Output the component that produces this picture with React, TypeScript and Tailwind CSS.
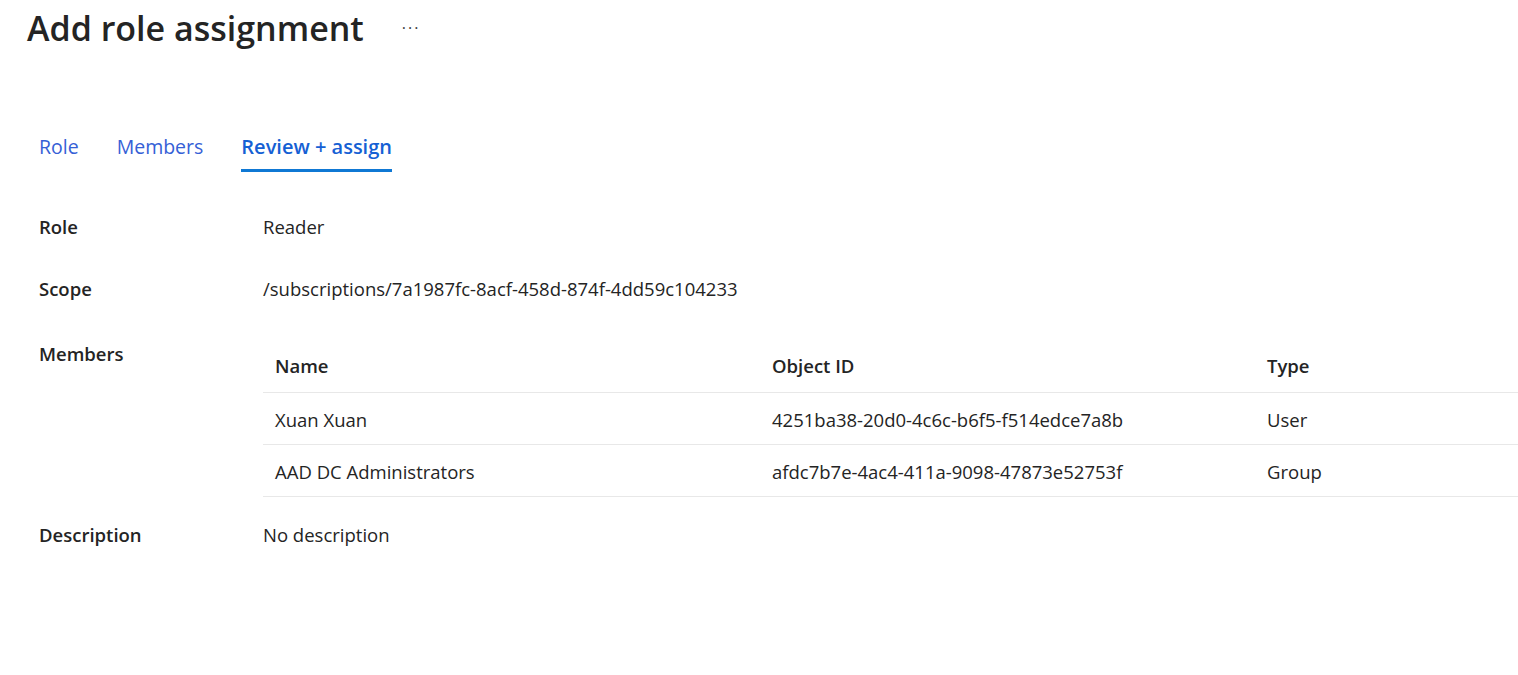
import React from 'react'

const font = { fontFamily: '"Open Sans", "Noto Sans", sans-serif' }

const members = [
  { name: 'Xuan Xuan', id: '4251ba38-20d0-4c6c-b6f5-f514edce7a8b', type: 'User' },
  { name: 'AAD DC Administrators', id: 'afdc7b7e-4ac4-411a-9098-47873e52753f', type: 'Group' },
]

function Tabs() {
  return (
    <div className="flex items-end gap-[38px] pl-[39px]">
      <div className="pb-[12px] text-[19.5px] leading-[27px] text-[#3560d6]">Role</div>
      <div className="pb-[12px] text-[19.5px] leading-[27px] text-[#3560d6]">Members</div>
      <div className="border-b-[3px] border-[#0f78d4] pb-[9px] text-[20px] font-semibold leading-[27px] text-[#1560d4]">
        Review + assign
      </div>
    </div>
  )
}

function Row({ label, children }: { label: string; children: React.ReactNode }) {
  return (
    <div className="flex">
      <div className="w-[224px] shrink-0 text-[18.5px] font-semibold leading-[25px] text-[#242424]">{label}</div>
      <div className="min-w-0 flex-1 text-[18.5px] leading-[25px] text-[#242424]">{children}</div>
    </div>
  )
}

export default function App() {
  return (
    <div className="h-[675px] w-[1518px] overflow-hidden bg-white text-[#242424]" style={font}>
      <div className="flex items-center pl-[27px] pt-[4px]">
        <h1 className="text-[34px] font-semibold leading-[48px] text-[#242424]">Add role assignment</h1>
        <span className="ml-[38px] text-[16px] tracking-[2px] text-[#424242]">···</span>
      </div>

      <div className="mt-[81px]">
        <Tabs />
      </div>

      <div className="mt-[42px] pl-[39px]">
        <Row label="Role">Reader</Row>
        <div className="mt-[37px]">
          <Row label="Scope">/subscriptions/7a1987fc-8acf-458d-874f-4dd59c104233</Row>
        </div>
        <div className="mt-[40px]">
          <Row label="Members">
            <table className="w-full border-collapse text-[18.5px] leading-[25px]">
              <thead>
                <tr className="border-b border-[#e8e8e8]">
                  <th className="w-[497px] px-[12px] pb-[14px] pt-[12px] text-left font-semibold">Name</th>
                  <th className="w-[495px] px-[12px] pb-[14px] pt-[12px] text-left font-semibold">Object ID</th>
                  <th className="px-[12px] pb-[14px] pt-[12px] text-left font-semibold">Type</th>
                </tr>
              </thead>
              <tbody>
                {members.map(m => (
                  <tr key={m.id} className="border-b border-[#e8e8e8]">
                    <td className="px-[12px] pb-[12px] pt-[14px]">{m.name}</td>
                    <td className="px-[12px] pb-[12px] pt-[14px]">{m.id}</td>
                    <td className="px-[12px] pb-[12px] pt-[14px]">{m.type}</td>
                  </tr>
                ))}
              </tbody>
            </table>
          </Row>
        </div>
        <div className="mt-[25px]">
          <Row label="Description">No description</Row>
        </div>
      </div>
    </div>
  )
}
